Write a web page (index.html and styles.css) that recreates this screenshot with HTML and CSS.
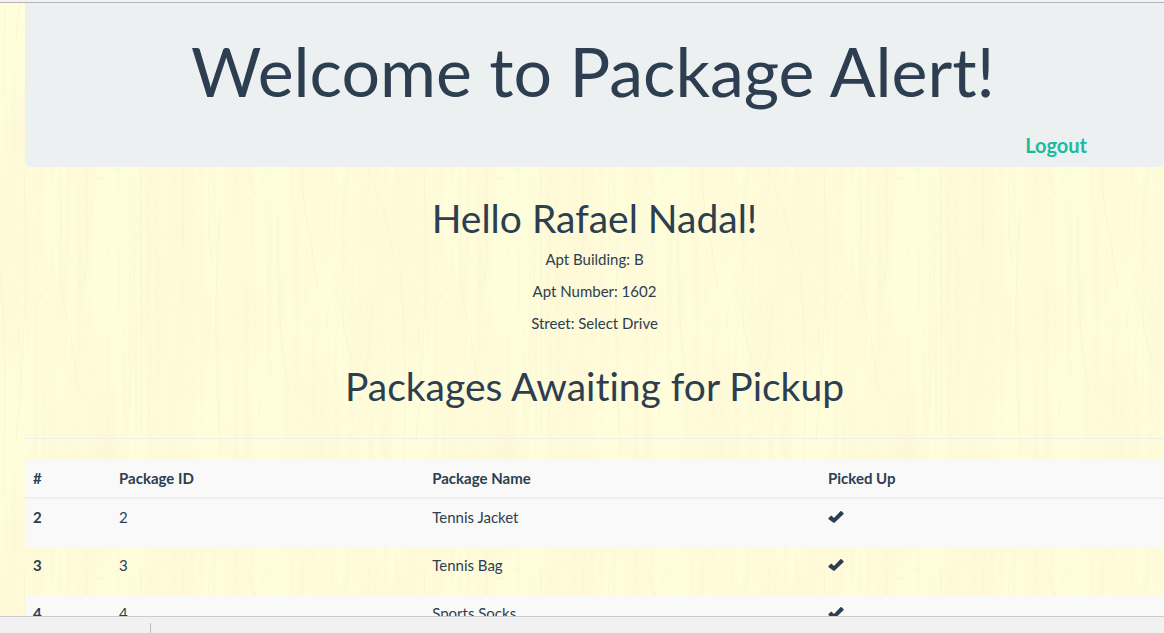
FILE: index.html
```html
<!DOCTYPE html>
<html lang="en">
<head>
<meta charset="utf-8">
<title>Package Alert</title>
<link rel="stylesheet" href="styles.css">
</head>
<body>
<svg class="defs" width="0" height="0" aria-hidden="true">
  <symbol id="check" viewBox="0 0 16 14">
    <path d="M.6 8 2.6 5.9Q3.2 5.3 3.9 5.9L6 7.9 12.4 1.3Q13 .8 13.6 1.3L15.4 3.1Q16 3.7 15.4 4.3L6.8 12.6Q6 13.2 5.2 12.6L.6 9.2Q0 8.6.6 8Z"/>
  </symbol>
</svg>
<div class="topline"></div>
<main class="page">
  <header class="jumbotron">
    <h1 class="title">Welcome to Package Alert!</h1>
    <a class="logout" href="#">Logout</a>
  </header>
  <section class="resident">
    <h2 class="heading">Hello Rafael Nadal!</h2>
    <p class="detail">Apt Building: B</p>
    <p class="detail">Apt Number: 1602</p>
    <p class="detail">Street: Select Drive</p>
  </section>
  <h2 class="heading heading-packages">Packages Awaiting for Pickup</h2>
  <hr class="rule">
  <table class="packages">
    <colgroup><col class="col-num"><col class="col-id"><col class="col-name"><col></colgroup>
    <thead>
      <tr><th scope="col">#</th><th scope="col">Package ID</th><th scope="col">Package Name</th><th scope="col">Picked Up</th></tr>
    </thead>
    <tbody>
      <tr><th scope="row">2</th><td>2</td><td>Tennis Jacket</td><td><svg class="check" role="img" aria-label="Picked up"><use href="#check"/></svg></td></tr>
      <tr><th scope="row">3</th><td>3</td><td>Tennis Bag</td><td><svg class="check" role="img" aria-label="Picked up"><use href="#check"/></svg></td></tr>
      <tr><th scope="row">4</th><td>4</td><td>Sports Socks</td><td><svg class="check" role="img" aria-label="Picked up"><use href="#check"/></svg></td></tr>
    </tbody>
  </table>
</main>
<footer class="shelf"><span class="shelf-divider"></span></footer>
</body>
</html>
```

FILE: styles.css
```css
* { box-sizing: border-box; }

body {
  margin: 0;
  height: 100vh;
  display: flex;
  flex-direction: column;
  overflow: hidden;
  font-family: Lato, sans-serif;
  font-size: 15px;
  line-height: 21px;
  font-variant-ligatures: none;
  color: #2c3e50;
}

.defs { position: absolute; }

.topline {
  flex: none;
  height: 3px;
  background: #f3f1f3;
  border-bottom: 1px solid #b4b4b4;
}

/* Light wood grain, repeated every 400px */
.page {
  flex: 1;
  min-height: 0;
  overflow: hidden;
  padding-left: 25px;
  background-color: #fffedb;
  background-position: 0 157px;
  background-image: url("data:image/svg+xml,%3Csvg xmlns='http://www.w3.org/2000/svg' width='400' height='400'%3E%3Cfilter id='a' x='0' y='0' width='100%25' height='100%25' color-interpolation-filters='sRGB'%3E%3CfeTurbulence type='fractalNoise' baseFrequency='.02 .005' numOctaves='3' seed='4' stitchTiles='stitch'/%3E%3CfeColorMatrix values='0 0 0 0 .996 0 0 0 0 .965 0 0 0 0 .84 2.6 0 0 0 -.9'/%3E%3C/filter%3E%3Cfilter id='b' x='0' y='0' width='100%25' height='100%25' color-interpolation-filters='sRGB'%3E%3CfeTurbulence type='fractalNoise' baseFrequency='.18 .005' numOctaves='2' seed='9' stitchTiles='stitch'/%3E%3CfeColorMatrix values='0 0 0 0 .98 0 0 0 0 .96 0 0 0 0 .83 0 2.4 0 0 -1.05'/%3E%3C/filter%3E%3Crect width='400' height='400' filter='url(%23a)' opacity='.65'/%3E%3Crect width='400' height='400' filter='url(%23b)' opacity='.5'/%3E%3Cg fill='none' stroke='%23ece8c6' stroke-width='.6' opacity='.55' transform='translate(0 10)'%3E%3Cpath d='M89 0Q100 14 108 6T123 0M61 0V60Q58 90 62 125Q72 160 78 220M40 130Q43 114 51 124M66 75L80 116Q85 120 87 90V0M105 90Q110 70 119 80V140M130 0V240M141 0V260M150 0V300M183 0V80M209 0V65L212 90M248 0L255 25L268 0M301 0Q305 50 310 65L318 120M326 160Q330 105 340 130Q350 200 360 200Q369 210 372 135M333 0V30M368 0Q375 20 384 40L394 90M0 100Q8 200 3 330M24 0Q29 150 16 270M220 40Q212 140 219 260M278 50Q277 170 289 220M258 246Q265 210 279 226'/%3E%3C/g%3E%3C/svg%3E");
}

.jumbotron {
  height: 164px;
  padding: 30px 77px 9px 74px;
  display: flex;
  flex-direction: column;
  background: #ecf0f1;
  border-radius: 0 0 6px 6px;
}

.title {
  margin: 0;
  font-size: 68px;
  line-height: 76px;
  font-weight: 400;
  text-align: center;
}

.logout {
  align-self: flex-end;
  margin-top: 24px;
  font-size: 20px;
  line-height: 24px;
  font-weight: 700;
  color: #18bc9c;
  text-decoration: none;
}

.resident { padding-top: 30px; text-align: center; }

.heading {
  margin: 0;
  font-size: 39px;
  line-height: 43px;
  font-weight: 400;
  text-align: center;
}

.resident .heading { margin-bottom: 9px; }
.detail { margin: 0 0 11px; }
.heading-packages { margin-top: 31px; }

.rule {
  margin: 30px 0 21px;
  border: 0;
  border-top: 1px solid #ecf0f1;
}

.packages {
  width: 100%;
  table-layout: fixed;
  border-collapse: separate;
  border-spacing: 0;
  text-align: left;
}

.col-num { width: 7.55%; }
.col-id { width: 27.5%; }
.col-name { width: 34.75%; }

.packages th,
.packages td { padding: 8px; vertical-align: top; }
.packages thead th { background: #f9f9f9; border-bottom: 2px solid #ecf0f1; }
.packages tbody tr { height: 48px; }
.packages tbody tr:nth-child(odd) { background: #f9f9f9; }

.check {
  display: block;
  width: 16px;
  height: 14px;
  margin-top: 3px;
  fill: #2c3e50;
}

.shelf {
  flex: none;
  height: 17px;
  padding: 6px 0 0 150px;
  background: #f1f1f1;
  border-top: 1px solid #ccc;
}

.shelf-divider {
  display: block;
  height: 10px;
  border-left: 1px solid #bbb;
}
```
